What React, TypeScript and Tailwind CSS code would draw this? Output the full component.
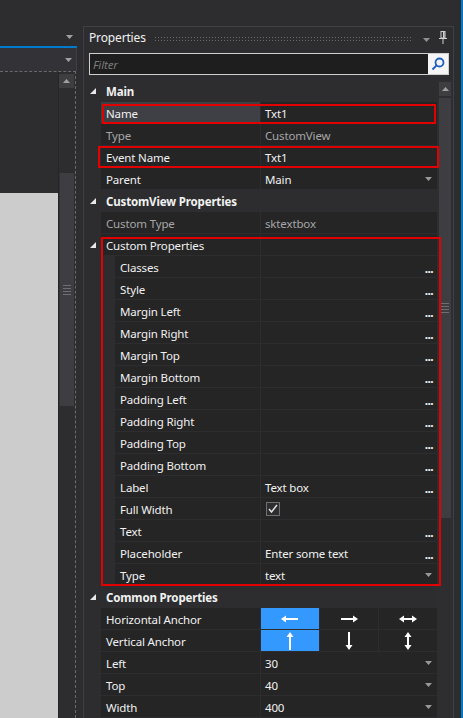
import React from "react";

const Tri = () => (
  <svg width="6" height="6" viewBox="0 0 6 6" className="block">
    <polygon points="6,0 6,6 0,6" fill="#e8e8e8" />
  </svg>
);

const Drop = ({ color = "#999999" }: { color?: string }) => (
  <svg width="7" height="4" viewBox="0 0 7 4" className="block">
    <polygon points="0,0 7,0 3.5,4" fill={color} />
  </svg>
);

const Dots = () => (
  <span className="ml-auto mr-[4px] mt-[5px] text-[#f1f1f1] text-[12px] font-bold leading-none tracking-[-0.6px]">...</span>
);

type RowProps = {
  name: string;
  value?: React.ReactNode;
  nested?: boolean;
  expandable?: boolean;
  dim?: boolean;
  selected?: boolean;
  right?: React.ReactNode;
};

const Row = ({ name, value, nested, expandable, dim, selected, right }: RowProps) => (
  <div className="flex h-[22px] shrink-0">
    <div className="w-[17px] shrink-0 bg-[#2d2d30] flex items-center justify-center pl-[1px]">
      {expandable && <Tri />}
    </div>
    {nested && <div className="w-[14px] shrink-0 bg-[#2d2d30]" />}
    <div
      className={
        "shrink-0 border-b border-r border-[#2d2d30] flex items-center pl-[5px] pt-[2px] " +
        (nested ? "w-[146px] " : "w-[160px] ") +
        (selected ? "bg-[#3f3f46] " : "bg-[#252526] ") +
        (dim ? "text-[#a6a6a6]" : "text-[#f1f1f1]")
      }
    >
      {name}
    </div>
    <div
      className={
        "flex-1 bg-[#252526] border-b border-[#2d2d30] flex items-center pl-[4px] " +
        (dim ? "text-[#a6a6a6]" : "text-[#f1f1f1]")
      }
    >
      {value !== undefined && <span className="pt-[2px] flex items-center">{value}</span>}
      {right}
    </div>
  </div>
);

const Header = ({ name }: { name: string }) => (
  <div className="flex h-[22px] shrink-0 bg-[#2d2d30]">
    <div className="w-[17px] shrink-0 flex items-center justify-center pl-[1px]">
      <Tri />
    </div>
    <div className="flex-1 flex items-center pl-[5px] pt-[2px] font-bold text-[#f1f1f1]">{name}</div>
  </div>
);

const ArrowH = ({ dir }: { dir: "l" | "r" | "b" }) => (
  <svg width="18" height="8" viewBox="0 0 18 8" className="block">
    {dir === "l" && (
      <>
        <line x1="4" y1="4" x2="17" y2="4" stroke="#ffffff" strokeWidth="2" />
        <polygon points="0,4 5,0.5 5,7.5" fill="#ffffff" />
      </>
    )}
    {dir === "r" && (
      <>
        <line x1="1" y1="4" x2="14" y2="4" stroke="#ffffff" strokeWidth="2" />
        <polygon points="18,4 13,0.5 13,7.5" fill="#ffffff" />
      </>
    )}
    {dir === "b" && (
      <>
        <line x1="4" y1="4" x2="14" y2="4" stroke="#ffffff" strokeWidth="2" />
        <polygon points="0,4 5,0.5 5,7.5" fill="#ffffff" />
        <polygon points="18,4 13,0.5 13,7.5" fill="#ffffff" />
      </>
    )}
  </svg>
);

const ArrowV = ({ dir }: { dir: "u" | "d" | "b" }) => (
  <svg width="8" height="18" viewBox="0 0 8 18" className="block">
    {dir === "u" && (
      <>
        <line x1="4" y1="4" x2="4" y2="18" stroke="#ffffff" strokeWidth="2" />
        <polygon points="4,0 0.5,5 7.5,5" fill="#ffffff" />
      </>
    )}
    {dir === "d" && (
      <>
        <line x1="4" y1="0" x2="4" y2="14" stroke="#ffffff" strokeWidth="2" />
        <polygon points="4,18 0.5,13 7.5,13" fill="#ffffff" />
      </>
    )}
    {dir === "b" && (
      <>
        <line x1="4" y1="4" x2="4" y2="14" stroke="#ffffff" strokeWidth="2" />
        <polygon points="4,0 0.5,5 7.5,5" fill="#ffffff" />
        <polygon points="4,18 0.5,13 7.5,13" fill="#ffffff" />
      </>
    )}
  </svg>
);

const AnchorRow = ({ name, items }: { name: string; items: React.ReactNode[] }) => (
  <div className="flex h-[22px] shrink-0">
    <div className="w-[17px] shrink-0 bg-[#2d2d30]" />
    <div className="w-[160px] shrink-0 bg-[#252526] border-b border-r border-[#2d2d30] flex items-center pl-[5px] pt-[2px] text-[#f1f1f1]">
      {name}
    </div>
    <div className="flex-1 bg-[#2d2d30] grid grid-cols-3 gap-x-px pb-px">
      {items.map((it, i) => (
        <div
          key={i}
          className={"flex items-center justify-center " + (i === 0 ? "bg-[#3399ff]" : "bg-[#252526]")}
        >
          {it}
        </div>
      ))}
    </div>
  </div>
);

export default function App() {
  const nested = [
    "Classes",
    "Style",
    "Margin Left",
    "Margin Right",
    "Margin Top",
    "Margin Bottom",
    "Padding Left",
    "Padding Right",
    "Padding Top",
    "Padding Bottom",
  ];
  return (
    <div
      className="w-[463px] h-[718px] flex bg-[#2d2d30] overflow-hidden text-[11.5px] tracking-[-0.15px] leading-none"
      style={{ fontFamily: '"Noto Sans", "Open Sans", sans-serif' }}
    >
      {/* Left editor area */}
      <div className="w-[83px] shrink-0 flex flex-col">
        <div className="h-[46px] w-[77px] flex justify-end items-end pb-[7px] pr-[4px]">
          <Drop color="#a0a0a0" />
        </div>
        <div className="h-[2px] w-[77px] bg-[#007acc]" />
        <div className="h-[23px] w-[77px] bg-[#333337] border-r border-[#3f3f46] flex justify-end items-center pr-[4px]">
          <Drop color="#a0a0a0" />
        </div>
        <div className="flex-1 w-[76px] border-t border-r border-dashed border-[#6a6a6a] flex">
          <div className="w-[58px] shrink-0 flex flex-col">
            <div className="h-[121px] bg-[#2d2d30]" />
            <div className="flex-1 bg-[#cccccc]" />
          </div>
          <div className="w-[1px] bg-[#252526]" />
          <div className="w-[15px] flex flex-col">
            <div className="h-[14px] mt-[2px] bg-[#3e3e42] flex items-center justify-center">
              <svg width="7" height="4" viewBox="0 0 7 4" className="block">
                <polygon points="3.5,0 7,4 0,4" fill="#a0a0a0" />
              </svg>
            </div>
            <div className="h-[85px]" />
            <div className="h-[233px] bg-[#3e3e42] flex flex-col items-center justify-center gap-[2px] border-l border-[#333337]">
              <div className="w-[8px] h-px bg-[#6e6e72]" />
              <div className="w-[8px] h-px bg-[#6e6e72]" />
              <div className="w-[8px] h-px bg-[#6e6e72]" />
              <div className="w-[8px] h-px bg-[#6e6e72]" />
            </div>
          </div>
        </div>
      </div>

      {/* Properties panel */}
      <div className="w-[371px] shrink-0 mt-[26px] border-l border-t border-r border-[#3f3f46] flex flex-col">
        <div className="h-[21px] shrink-0 flex items-center pl-[5px] pr-[6px] text-[#f1f1f1]">
          <span className="text-[12px]">Properties</span>
          <div className="ml-[8px] flex-1 h-[5px] bg-[radial-gradient(circle,#6a6a6e_0.8px,transparent_0.9px)] bg-[length:3px_3px] mt-[1px]" />
          <div className="ml-[10px] mt-[4px]">
            <Drop color="#909090" />
          </div>
          <div className="ml-[9px]">
            <svg width="8" height="13" viewBox="0 0 8 13" className="block">
              <rect x="2" y="0.5" width="4" height="6.5" fill="none" stroke="#d0d0d0" strokeWidth="1" />
              <rect x="4" y="1" width="1.5" height="6" fill="#d0d0d0" />
              <line x1="0" y1="7.5" x2="8" y2="7.5" stroke="#d0d0d0" strokeWidth="1" />
              <line x1="4" y1="8" x2="4" y2="13" stroke="#d0d0d0" strokeWidth="1" />
            </svg>
          </div>
        </div>
        <div className="h-[32px] shrink-0 flex items-center pl-[5px] pr-[4px]">
          <div className="flex-1 h-[22px] border border-[#cfcfcf] bg-[#1e1e1e] flex items-stretch">
            <span className="flex-1 flex items-center pl-[3px] pt-[2px] italic text-[#7a7a7a]">Filter</span>
            <div className="w-[20px] bg-[#f5f5f5] flex items-center justify-center">
              <svg width="14" height="14" viewBox="0 0 14 14" className="block">
                <circle cx="8.5" cy="5.5" r="4" fill="none" stroke="#1f5fbf" strokeWidth="1.8" />
                <line x1="5.6" y1="8.4" x2="1.5" y2="12.5" stroke="#1f5fbf" strokeWidth="2" />
              </svg>
            </div>
          </div>
        </div>

        <div className="flex-1 flex relative">
          <div className="flex-1 flex flex-col">
            <Header name="Main" />
            <Row name="Name" value="Txt1" selected />
            <Row name="Type" value="CustomView" dim />
            <Row name="Event Name" value="Txt1" />
            <Row
              name="Parent"
              value="Main"
              right={
                <div className="ml-auto mr-[5px]">
                  <Drop />
                </div>
              }
            />
            <Header name="CustomView Properties" />
            <Row name="Custom Type" value="sktextbox" dim />
            <Row name="Custom Properties" expandable />
            {nested.map((n) => (
              <Row key={n} name={n} nested right={<Dots />} />
            ))}
            <Row name="Label" value="Text box" nested right={<Dots />} />
            <Row
              name="Full Width"
              nested
              value={
                <span className="-mt-[2px] ml-[1px] w-[14px] h-[14px] border border-[#707070] bg-[#2d2d30] flex items-center justify-center">
                  <svg width="10" height="9" viewBox="0 0 10 9" className="block">
                    <polyline points="1,5 3.5,8 9,1" fill="none" stroke="#e0e0e0" strokeWidth="1.5" />
                  </svg>
                </span>
              }
            />
            <Row name="Text" nested right={<Dots />} />
            <Row name="Placeholder" value="Enter some text" nested right={<Dots />} />
            <Row
              name="Type"
              value="text"
              nested
              right={
                <div className="ml-auto mr-[5px]">
                  <Drop />
                </div>
              }
            />
            <Header name="Common Properties" />
            <AnchorRow
              name="Horizontal Anchor"
              items={[<ArrowH dir="l" />, <ArrowH dir="r" />, <ArrowH dir="b" />]}
            />
            <AnchorRow
              name="Vertical Anchor"
              items={[<ArrowV dir="u" />, <ArrowV dir="d" />, <ArrowV dir="b" />]}
            />
            <Row name="Left" value="30" right={<div className="ml-auto mr-[5px]"><Drop /></div>} />
            <Row name="Top" value="40" right={<div className="ml-auto mr-[5px]"><Drop /></div>} />
            <Row name="Width" value="400" right={<div className="ml-auto mr-[5px]"><Drop /></div>} />
          </div>

          {/* scrollbar */}
          <div className="w-[16px] shrink-0 bg-[#2e2e31] flex flex-col items-center">
            <div className="mt-[2px] w-[12px] h-[14px] bg-[#3e3e42] flex items-center justify-center">
              <svg width="7" height="4" viewBox="0 0 7 4" className="block">
                <polygon points="3.5,0 7,4 0,4" fill="#a0a0a0" />
              </svg>
            </div>
            <div className="mt-[2px] w-[12px] h-[420px] bg-[#3e3e42] flex flex-col items-center justify-center gap-[2px]">
              <div className="w-[8px] h-px bg-[#6e6e72]" />
              <div className="w-[8px] h-px bg-[#6e6e72]" />
              <div className="w-[8px] h-px bg-[#6e6e72]" />
              <div className="w-[8px] h-px bg-[#6e6e72]" />
            </div>
          </div>

          {/* red highlight boxes */}
          <div className="absolute left-[18px] top-[24px] w-[334px] h-[20px] border-2 border-[#e30000] pointer-events-none" />
          <div className="absolute left-[14px] top-[66px] w-[341px] h-[22px] border-2 border-[#e30000] pointer-events-none" />
          <div className="absolute left-[17px] top-[157px] w-[340px] h-[349px] border-2 border-[#e30000] pointer-events-none" />
        </div>
      </div>

      <div className="w-[7px] shrink-0" />
      <div className="w-[2px] shrink-0 bg-[#007acc]" />
    </div>
  );
}
